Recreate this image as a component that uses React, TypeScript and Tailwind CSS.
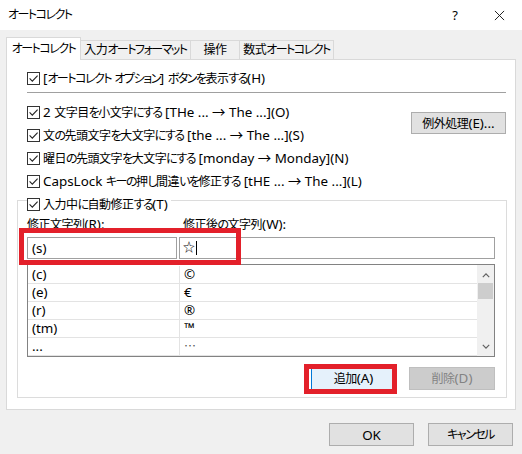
import type { ReactNode } from "react";

// Windows 風「オートコレクト」ダイアログ
// 和文（かな・漢字）と欧文で字幅を変えて Yu Gothic UI / Segoe UI の見た目に寄せる
const KANA = /[\u3000-\u30ff\uff00-\uffef]/;
const KANJI = /[\u4e00-\u9fff]/;
function T({ s }: { s: string }) {
  const parts = s.split(/([\u3000-\u30ff\uff00-\uffef]+|[\u4e00-\u9fff]+)/).filter(Boolean);
  return (
    <>
      {parts.map((p, i) =>
        KANA.test(p) ? (
          <span key={i} className="tracking-[-1.5px]">
            {p}
          </span>
        ) : KANJI.test(p) ? (
          <span key={i} className="tracking-[-0.5px]">
            {p}
          </span>
        ) : (
          <span key={i} className="text-[13.4px]">
            {p}
          </span>
        ),
      )}
    </>
  );
}

function CheckBox({ label }: { label: string }) {
  return (
    <div className="flex h-[18px] items-center gap-[3px] whitespace-nowrap">
      <span className="grid h-[13px] w-[13px] shrink-0 place-items-center border border-[#333] bg-white">
        <svg viewBox="0 0 11 11" className="h-[11px] w-[11px]">
          <path d="M1.6 5.4 L4.3 8.1 L9.6 2.6" fill="none" stroke="#222" strokeWidth="1.1" />
        </svg>
      </span>
      <span>
        <T s={label} />
      </span>
    </div>
  );
}

function Btn({ children }: { children: ReactNode }) {
  return (
    <div className="grid h-[23px] w-[85px] place-items-center whitespace-nowrap border border-[#adadad] bg-[#e1e1e1]">
      {children}
    </div>
  );
}

const ROWS: [string, string][] = [
  ["(c)", "©"],
  ["(e)", "€"],
  ["(r)", "®"],
  ["(tm)", "™"],
];

export default function App() {
  return (
    <div className="flex h-[454px] w-[522px] flex-col overflow-hidden bg-[#f0f0f0] font-['Noto_Sans','Noto_Sans_CJK_JP',sans-serif] text-[12px] leading-[16px] text-black [font-feature-settings:'palt']">
      {/* タイトルバー */}
      <div className="flex h-[30px] shrink-0 items-center bg-white pl-[8px]">
        <span className="flex-1">
          <T s="オートコレクト" />
        </span>
        <span className="w-[42px] text-center text-[13px]">?</span>
        <span className="grid w-[46px] place-items-center">
          <svg viewBox="0 0 12 12" className="h-[11px] w-[11px]">
            <path d="M1 1 L11 11 M11 1 L1 11" stroke="#111" strokeWidth="1" fill="none" />
          </svg>
        </span>
      </div>

      {/* タブ */}
      <div className="mt-[7px] flex h-[22px] items-end whitespace-nowrap pl-[6px]">
        <div className="relative z-10 -mb-px grid h-[23px] w-[75px] place-items-center border border-b-0 border-[#d9d9d9] bg-white">
          <span>
            <T s="オートコレクト" />
          </span>
        </div>
        <div className="grid h-[19px] w-[110px] place-items-center border border-l-0 border-b-0 border-[#d9d9d9]">
          <span>
            <T s="入力オートフォーマット" />
          </span>
        </div>
        <div className="grid h-[19px] w-[49px] place-items-center border border-l-0 border-b-0 border-[#d9d9d9]">
          <span>
            <T s="操作" />
          </span>
        </div>
        <div className="grid h-[19px] w-[94px] place-items-center border border-l-0 border-b-0 border-[#d9d9d9]">
          <span>
            <T s="数式オートコレクト" />
          </span>
        </div>
      </div>

      {/* パネル */}
      <div className="mx-[6px] flex h-[351px] flex-col border border-[#d9d9d9] bg-white pl-[10px] pr-[8px]">
        <div className="pl-[10px] pr-[1px]">
          <div className="mt-[9px]">
            <CheckBox label="[オートコレクト オプション] ボタンを表示する(H)" />
          </div>
          <div className="mt-[5px] h-px bg-[#a0a0a0]" />
          <div className="mt-[10px] flex">
            <div className="flex flex-1 flex-col gap-[5px]">
              <CheckBox label="2 文字目を小文字にする [THe ... → The ...](O)" />
              <CheckBox label="文の先頭文字を大文字にする [the ... → The ...](S)" />
              <CheckBox label="曜日の先頭文字を大文字にする [monday → Monday](N)" />
              <CheckBox label="CapsLock キーの押し間違いを修正する [tHE ... → The ...](L)" />
            </div>
            <div className="mt-[9px] grid h-[22px] w-[95px] place-items-center whitespace-nowrap border border-[#adadad] bg-[#e1e1e1]">
              <span>
                <T s="例外処理(E)..." />
              </span>
            </div>
          </div>
        </div>

        {/* グループ */}
        <div className="relative mt-[10px] border border-[#dcdcdc] pb-[7px] pl-[9px] pr-[11px] pt-[15px]">
          <div className="absolute -top-[6px] left-[9px] bg-white pr-[3px]">
            <CheckBox label="入力中に自動修正する(T)" />
          </div>

          <div className="flex h-[16px] whitespace-nowrap">
            <span className="w-[156px]">
              <T s="修正文字列(R):" />
            </span>
            <span>
              <T s="修正後の文字列(W):" />
            </span>
          </div>

          <div className="mt-[5px] flex h-[22px] gap-[2px] text-[13.4px]">
            <div className="flex w-[150px] items-center border border-[#a0a0a0] pl-[4px]">(s)</div>
            <div className="flex flex-1 items-center border border-[#a0a0a0] pl-[3px]">
              <span className="text-[12px]">☆</span>
              <span className="ml-px h-[14px] w-px bg-black" />
            </div>
          </div>

          <div className="mt-[5px] flex h-[93px] border border-[#828282]">
            <div className="flex flex-1 flex-col pt-px text-[13.4px]">
              {ROWS.map(([a, b]) => (
                <div key={a} className="flex h-[18px] border-b border-[#e3e3e3]">
                  <span className="w-[152px] border-r border-[#e3e3e3] pl-[4px]">{a}</span>
                  <span className="pl-[4px]">{b}</span>
                </div>
              ))}
              <div className="flex h-[18px] border-b border-[#e3e3e3]">
                <span className="w-[152px] border-r border-[#e3e3e3] pl-[4px]">...</span>
                <span className="pl-[4px] font-['Noto_Sans_CJK_JP',sans-serif] text-[12px] text-[#555]">…</span>
              </div>
            </div>
            <div className="flex w-[17px] flex-col items-center bg-[#f0f0f0]">
              <svg viewBox="0 0 10 6" className="mt-[8px] h-[5px] w-[8px]">
                <path d="M1 5 L5 1 L9 5" stroke="#606060" strokeWidth="1.5" fill="none" />
              </svg>
              <div className="mt-[5px] h-[16px] w-[15px] bg-[#cdcdcd]" />
              <div className="flex-1" />
              <svg viewBox="0 0 10 6" className="mb-[7px] h-[5px] w-[8px]">
                <path d="M1 1 L5 5 L9 1" stroke="#606060" strokeWidth="1.5" fill="none" />
              </svg>
            </div>
          </div>

          <div className="mt-[10px] flex justify-end gap-[13px] whitespace-nowrap">
            <div className="grid h-[23px] w-[85px] place-items-center border border-[#0078d7] bg-[#e5f1fb]">
              <span>
                <T s="追加(A)" />
              </span>
            </div>
            <div className="grid h-[23px] w-[86px] place-items-center border border-[#bfbfbf] bg-[#cccccc] text-[#838383]">
              <span>
                <T s="削除(D)" />
              </span>
            </div>
          </div>

          {/* 強調枠 */}
          <div className="absolute left-[1px] top-[27px] h-[37px] w-[222px] border-[5px] border-[#e3202a]" />
          <div className="absolute left-[286px] top-[163px] h-[30px] w-[93px] border-[5px] border-[#e3202a]" />
        </div>
      </div>

      {/* OK / キャンセル */}
      <div className="mt-[13px] flex justify-end gap-[14px] pr-[9px]">
        <Btn>
          <span className="text-[13.4px]">OK</span>
        </Btn>
        <Btn>
          <span>
            <T s="キャンセル" />
          </span>
        </Btn>
      </div>
    </div>
  );
}
